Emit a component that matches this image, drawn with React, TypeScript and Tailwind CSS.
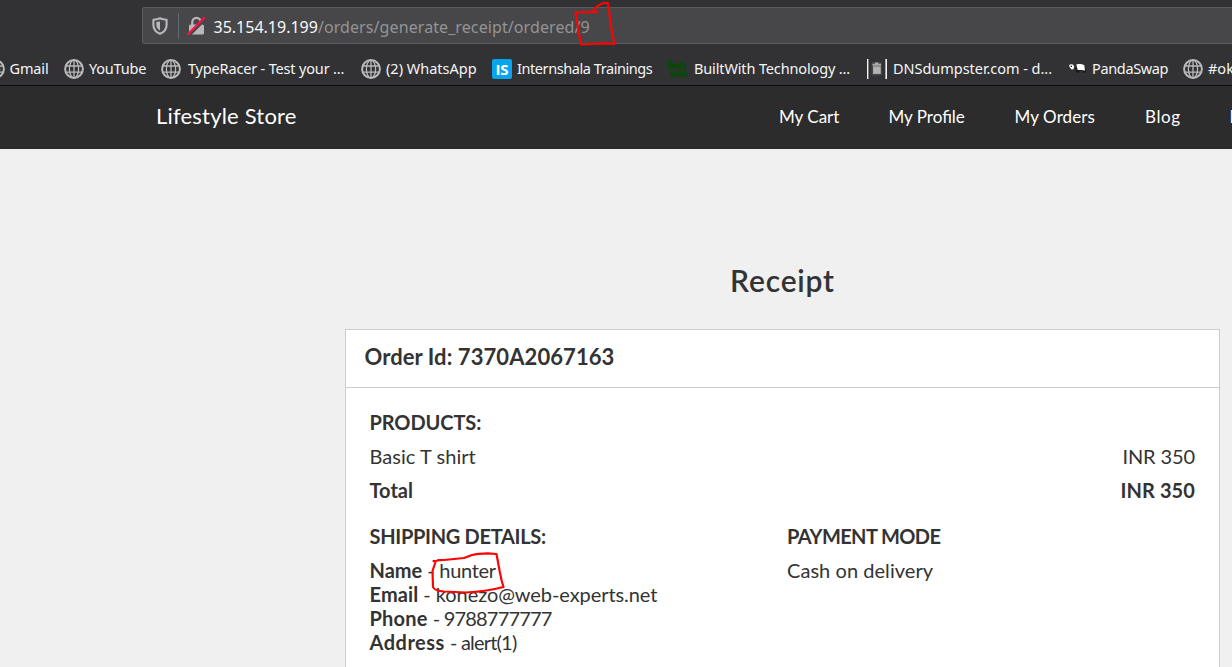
import type { ReactNode } from "react";

function Globe() {
  return (
    <svg className="h-5 w-5 shrink-0" viewBox="0 0 20 20" fill="none" stroke="#b9b9ba">
      <circle cx="10" cy="10" r="8.9" strokeWidth="2" />
      <ellipse cx="10" cy="10" rx="4.6" ry="8.8" strokeWidth="1.3" />
      <path d="M10 1v18M1.5 7h17M1.5 13.2h17" strokeWidth="1.3" />
    </svg>
  );
}

function InternshalaIcon() {
  return (
    <span className="flex h-5 w-5 shrink-0 items-center justify-center rounded-[2px] bg-[#08a5ee] font-['Open_Sans',sans-serif] text-[15px] leading-none font-bold text-white">
      IS
    </span>
  );
}

function BuiltWithIcon() {
  return (
    <svg className="h-5 w-5 shrink-0 overflow-visible font-['Open_Sans',sans-serif] font-extrabold" viewBox="0 0 20 20" fill="#064a06" stroke="#064a06" strokeWidth=".5">
      <text x="0" y="10" fontSize="8.5" textLength="19" lengthAdjust="spacingAndGlyphs">
        <tspan fontSize="12">b</tspan>uilt
      </text>
      <text x="3" y="18" fontSize="8.5" textLength="17" lengthAdjust="spacingAndGlyphs">with</text>
    </svg>
  );
}

function DnsIcon() {
  return (
    <svg className="h-5 w-5 shrink-0" viewBox="0 0 20 20">
      <path d="M0 0h1.4v20H0zM18.4 0h1.6v20h-1.6z" fill="#f4f4f4" />
      <rect x="4.500" y="3" width="10.500" height="13.500" rx="1" fill="#454546" />
      <path d="M8 3.500h3.500v1.200h2.500v2H5.500v-2H8zM6 7.200h7.800V15H6z" fill="#a9a9a9" />
      <path d="M8 8.500v5.500M10 8.500v5.500M12 8.500v5.500" stroke="#c4c4c4" strokeWidth=".7" />
    </svg>
  );
}

function PandaIcon() {
  return (
    <svg className="h-5 w-5 shrink-0" viewBox="0 0 20 20">
      <path d="M7.500 8h9l1.500 2v3.700h-3v-2h-3.500v2H8z" fill="#1c1c1d" />
      <path d="M1.200 6l1.500-.8 2.300.3 1.200 2-.8 2.700-1.700.2-2.200-2.400zM8.300 5.600c3-.8 6-.6 8 .6l.7 5.400-3.300-.7-4 .2z" fill="#fff" />
      <circle cx="3.300" cy="7.300" r=".8" fill="#111" />
    </svg>
  );
}

type Bookmark = { icon: ReactNode; label: string; box: string; text: string };

const bookmarks: Bookmark[] = [
  { icon: <Globe />, label: "Gmail", box: "-ml-[15px] w-[79px] gap-[4.5px]", text: "tracking-[-0.15px]" },
  { icon: <Globe />, label: "YouTube", box: "w-[97px] gap-[5px]", text: "tracking-[-0.2px]" },
  { icon: <Globe />, label: "TypeRacer - Test your ...", box: "w-[200px] gap-[7px]", text: "tracking-[-0.17px]" },
  { icon: <Globe />, label: "(2) WhatsApp", box: "w-[131px] gap-[5px]", text: "tracking-[0px]" },
  { icon: <InternshalaIcon />, label: "Internshala Trainings", box: "w-[175px] gap-[5px]", text: "tracking-[-0.43px]" },
  { icon: <BuiltWithIcon />, label: "BuiltWith Technology ...", box: "w-[200px] gap-[7px]", text: "tracking-[-0.14px]" },
  { icon: <DnsIcon />, label: "DNSdumpster.com - d...", box: "w-[201px] gap-[6px]", text: "tracking-[-0.04px]" },
  { icon: <PandaIcon />, label: "PandaSwap", box: "w-[115px] gap-[4px]", text: "tracking-[-0.35px]" },
  { icon: <Globe />, label: "#ok", box: "w-[60px] gap-[5px]", text: "tracking-[0px]" },
];

const nav = [
  { label: "My Cart", cls: "w-[109.5px]" },
  { label: "My Profile", cls: "w-[126px]" },
  { label: "My Orders", cls: "w-[130.5px] tracking-[0.1px]" },
  { label: "Blog", cls: "w-[84.5px] tracking-[0.6px]" },
  { label: "L", cls: "w-[20px]" },
];

const shipping = [
  { name: "Name", nameCls: "", value: "- hunter", cls: "tracking-[-0.3px]" },
  { name: "Email", nameCls: "tracking-[0.1px]", value: "- konezo@web-experts.net", cls: "tracking-[-0.07px]" },
  { name: "Phone", nameCls: "tracking-[0.2px]", value: "- 9788777777", cls: "tracking-[-0.8px]" },
  { name: "Address", nameCls: "tracking-[0.5px]", value: "- alert(1)", cls: "tracking-[-0.8px]" },
];

function BrowserChrome() {
  return (
    <div className="relative h-[86px] border-b border-[#0c0c0d] bg-[#323234] font-['Noto_Sans','Open_Sans',sans-serif]">
      <div className="pt-[7px] pl-[142px]">
        <div className="flex h-[37px] w-[1100px] items-center rounded-l-[2px] border border-[#5b5b5e] bg-[#474749]">
          <svg className="ml-[9px] h-[18px] w-4" viewBox="0 0 16 18">
            <path d="M8 1.2c2.3 1 4.4 1.3 6.6 1.5v5.2c0 4.2-2.8 7.2-6.6 8.9-3.8-1.7-6.6-4.7-6.6-8.9V2.7C3.600 2.500 5.700 2.200 8 1.200z" fill="none" stroke="#b8b8b9" strokeWidth="2.100" strokeLinejoin="round" />
            <path d="M8 4.300v9.300c-2.200-1.300-3.700-3.200-3.700-5.900V5.100C5.600 5 6.800 4.700 8 4.300z" fill="#b8b8b9" />
          </svg>
          <div className="ml-[10px] h-[26px] w-px bg-[#606978]" />
          <svg className="ml-[8px] h-5 w-[19px]" viewBox="0 0 19 20">
            <path d="M5.300 9V6a4.200 4.200 0 0 1 8.400 0v3" fill="none" stroke="#b8b8b9" strokeWidth="2.200" />
            <rect x="2" y="8.500" width="15" height="10" rx="1.500" fill="#b8b8b9" />
            <path d="M2.200 19.500L19 2.800" stroke="#474749" strokeWidth="2.400" />
            <path d="M1 18.200L17.300 1.800" stroke="#f5124a" strokeWidth="2.200" strokeLinecap="round" />
          </svg>
          <div className="ml-[7.5px] pt-[2px] text-[16px] leading-6 whitespace-pre text-[#f9f9fa]">
            35.154.19.199<span className="tracking-[0.09px] text-[#949495]">/orders/generate_receipt/ordered/9</span>
          </div>
        </div>
      </div>
      <div className="mt-[13px] flex h-6 overflow-hidden">
        {bookmarks.map((b) => (
          <div key={b.label} className={`flex h-6 shrink-0 items-center ${b.box}`}>
            {b.icon}
            <span className={`pb-[2px] text-[14.5px] leading-[22px] whitespace-nowrap text-[#f5f5f6] ${b.text}`}>{b.label}</span>
          </div>
        ))}
      </div>
    </div>
  );
}

function SiteHeader() {
  return (
    <header className="flex h-[63px] items-center overflow-hidden bg-[#2c2c2c] pl-[156px] text-white">
      <div className="w-[623px] shrink-0 pb-[4px] text-[22px] leading-[28px] tracking-[0.2px]">Lifestyle Store</div>
      <nav className="flex shrink-0 pb-px text-[17px] leading-6">
        {nav.map((n) => (
          <span key={n.label} className={`shrink-0 ${n.cls}`}>{n.label}</span>
        ))}
      </nav>
    </header>
  );
}

function Receipt() {
  return (
    <main className="w-[1220px] pl-[345px]">
      <h1 className="pt-[111px] text-center text-[30px] leading-10 font-semibold tracking-[0.8px]">Receipt</h1>
      <section className="mt-[29px] h-[400px] border border-[#ccc] bg-white">
        <div className="flex h-[58px] items-center border-b border-[#ccc] pb-[4px] pl-[18.5px] text-[22px] font-bold tracking-[0.08px]">
          Order Id: 7370A2067163
        </div>
        <div className="pt-[22px] pr-6 pl-[23.5px] text-[20px] leading-6">
          <h2 className="font-bold tracking-[-0.1px]">PRODUCTS:</h2>
          <div className="mt-2.5 flex justify-between">
            <span className="tracking-[0.05px]">Basic T shirt</span>
            <span className="tracking-[-0.1px]">INR 350</span>
          </div>
          <div className="mt-2.5 flex justify-between font-bold">
            <span>Total</span>
            <span className="tracking-[0.1px]">INR 350</span>
          </div>
          <div className="mt-[22px] flex">
            <div className="w-[417.5px]">
              <h2 className="mb-2.5 font-bold tracking-[-0.3px]">SHIPPING DETAILS:</h2>
              {shipping.map((s) => (
                <div key={s.name} className="whitespace-pre">
                  <span className={`font-bold ${s.nameCls}`}>{s.name}</span> <span className={s.cls}>{s.value}</span>
                </div>
              ))}
            </div>
            <div>
              <h2 className="mb-2.5 font-bold tracking-[-0.6px]">PAYMENT MODE</h2>
              <div className="tracking-[0.05px]">Cash on delivery</div>
            </div>
          </div>
        </div>
      </section>
    </main>
  );
}

function PenMarks() {
  return (
    <svg className="pointer-events-none absolute inset-0 h-[667px] w-[1232px]" viewBox="0 0 1232 667" fill="none" stroke="#fb0404" strokeWidth="2.200" strokeLinecap="round" strokeLinejoin="round">
      <path d="M597.500 11.800L575.500 12.500L578 28L581 44.500L605 43.300L614.500 43.800L611 27L608 3L603 3.200C598 5 594.500 7.500 593.500 11" />
      <path d="M443 560L433.500 561L435.500 562L432.500 571L433 587C434 590 437 591 444 591.500L466 592.500C480 592 492 590 503.500 587L502 582L500 573L496.500 554L488 553.300C480 553.500 476 554 472 555L464 558L444 560L438 560" />
    </svg>
  );
}

export default function App() {
  return (
    <div className="relative h-[667px] w-[1232px] overflow-hidden bg-[#f0f0f0] font-['Lato',sans-serif] text-[#333]">
      <BrowserChrome />
      <SiteHeader />
      <Receipt />
      <PenMarks />
    </div>
  );
}
